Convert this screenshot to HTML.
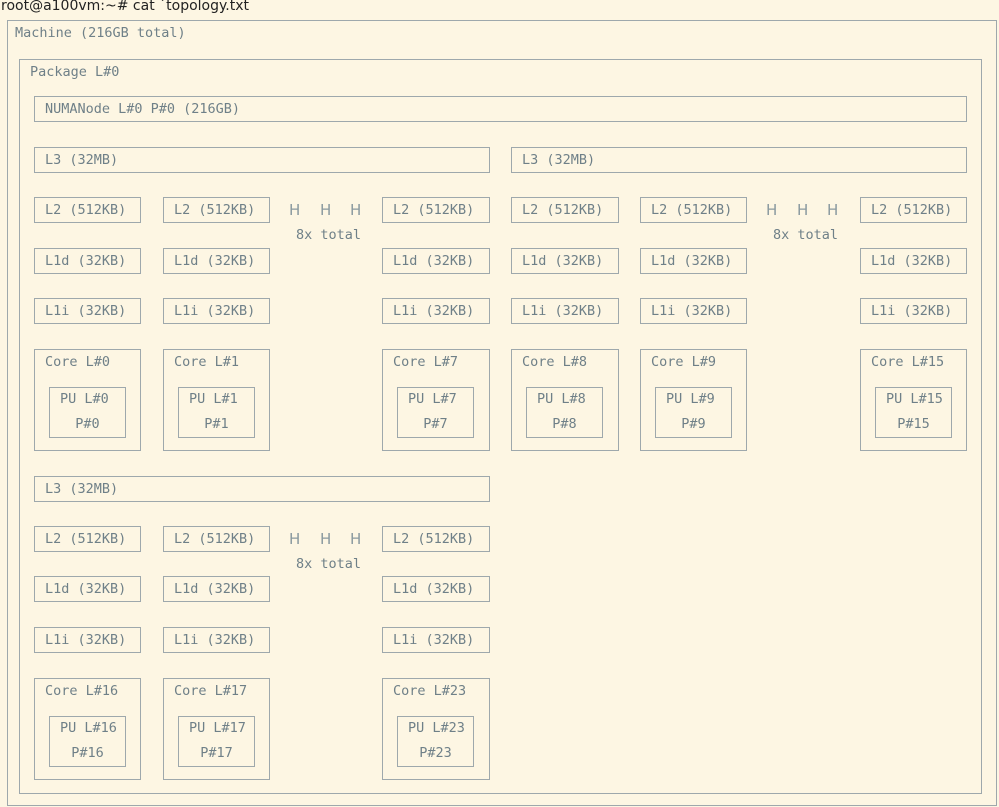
<!DOCTYPE html>
<html><head><meta charset="utf-8">
<style>
*{margin:0;padding:0;box-sizing:border-box}
body{width:999px;height:807px;background:#fdf6e3;position:relative;overflow:hidden;font-family:"DejaVu Sans Mono","Liberation Mono",monospace;font-size:13.5px;color:#6f8088}
.b{position:absolute;border:1.5px solid #9ea8ac}
.s{line-height:24px;padding-left:10px;white-space:pre}
.t{position:absolute;white-space:pre}
.c .t{left:10px;top:4px}
.p{position:absolute;left:14px;top:37px;width:77px;height:51px;border:1.5px solid #9ea8ac}
.p .a{position:absolute;left:10px;top:3px;white-space:pre}
.p .q{position:absolute;left:0;right:0;top:28px;text-align:center;white-space:pre}
.h{position:absolute;font-size:15px;color:#8a999f;font-family:"DejaVu Sans",sans-serif}
</style></head><body>
<div class="t" style="left:1px;top:-2px;color:#222;font-size:14px;font-family:'DejaVu Sans',sans-serif">root@a100vm:~# cat `topology.txt</div>
<div class="b" style="left:7px;top:20px;width:990px;height:786px"></div>
<div class="t" style="left:15px;top:25px">Machine (216GB total)</div>
<div class="b" style="left:19px;top:59px;width:963px;height:735px"></div>
<div class="t" style="left:30px;top:64px">Package L#0</div>
<div class="b s" style="left:34px;top:96px;width:933px;height:26px">NUMANode L#0 P#0 (216GB)</div>

<div class="b s" style="left:34px;top:147px;width:456px;height:26px">L3 (32MB)</div>
<div class="b s" style="left:511px;top:147px;width:456px;height:26px">L3 (32MB)</div>
<div class="b s" style="left:34px;top:476px;width:456px;height:26px">L3 (32MB)</div>

<div class="b s" style="left:34px;top:197px;width:107px;height:26px">L2 (512KB)</div>
<div class="b s" style="left:163px;top:197px;width:107px;height:26px">L2 (512KB)</div>
<div class="b s" style="left:382px;top:197px;width:108px;height:26px">L2 (512KB)</div>
<div class="b s" style="left:511px;top:197px;width:108px;height:26px">L2 (512KB)</div>
<div class="b s" style="left:640px;top:197px;width:107px;height:26px">L2 (512KB)</div>
<div class="b s" style="left:860px;top:197px;width:107px;height:26px">L2 (512KB)</div>
<div class="b s" style="left:34px;top:248px;width:107px;height:26px">L1d (32KB)</div>
<div class="b s" style="left:163px;top:248px;width:107px;height:26px">L1d (32KB)</div>
<div class="b s" style="left:382px;top:248px;width:108px;height:26px">L1d (32KB)</div>
<div class="b s" style="left:511px;top:248px;width:108px;height:26px">L1d (32KB)</div>
<div class="b s" style="left:640px;top:248px;width:107px;height:26px">L1d (32KB)</div>
<div class="b s" style="left:860px;top:248px;width:107px;height:26px">L1d (32KB)</div>
<div class="b s" style="left:34px;top:298px;width:107px;height:26px">L1i (32KB)</div>
<div class="b s" style="left:163px;top:298px;width:107px;height:26px">L1i (32KB)</div>
<div class="b s" style="left:382px;top:298px;width:108px;height:26px">L1i (32KB)</div>
<div class="b s" style="left:511px;top:298px;width:108px;height:26px">L1i (32KB)</div>
<div class="b s" style="left:640px;top:298px;width:107px;height:26px">L1i (32KB)</div>
<div class="b s" style="left:860px;top:298px;width:107px;height:26px">L1i (32KB)</div>

<div class="b c" style="left:34px;top:349px;width:107px;height:102px"><span class="t">Core L#0</span><div class="p"><span class="a">PU L#0</span><span class="q">P#0</span></div></div>
<div class="b c" style="left:163px;top:349px;width:107px;height:102px"><span class="t">Core L#1</span><div class="p"><span class="a">PU L#1</span><span class="q">P#1</span></div></div>
<div class="b c" style="left:382px;top:349px;width:108px;height:102px"><span class="t">Core L#7</span><div class="p"><span class="a">PU L#7</span><span class="q">P#7</span></div></div>
<div class="b c" style="left:511px;top:349px;width:108px;height:102px"><span class="t">Core L#8</span><div class="p"><span class="a">PU L#8</span><span class="q">P#8</span></div></div>
<div class="b c" style="left:640px;top:349px;width:107px;height:102px"><span class="t">Core L#9</span><div class="p"><span class="a">PU L#9</span><span class="q">P#9</span></div></div>
<div class="b c" style="left:860px;top:349px;width:107px;height:102px"><span class="t">Core L#15</span><div class="p"><span class="a">PU L#15</span><span class="q">P#15</span></div></div>

<div class="h" style="left:289px;top:201px">H</div><div class="h" style="left:320px;top:201px">H</div><div class="h" style="left:350px;top:201px">H</div>
<div class="t" style="left:296px;top:227px">8x total</div>
<div class="h" style="left:766px;top:201px">H</div><div class="h" style="left:797px;top:201px">H</div><div class="h" style="left:827px;top:201px">H</div>
<div class="t" style="left:773px;top:227px">8x total</div>

<div class="b s" style="left:34px;top:526px;width:107px;height:26px">L2 (512KB)</div>
<div class="b s" style="left:163px;top:526px;width:107px;height:26px">L2 (512KB)</div>
<div class="b s" style="left:382px;top:526px;width:108px;height:26px">L2 (512KB)</div>
<div class="b s" style="left:34px;top:576px;width:107px;height:26px">L1d (32KB)</div>
<div class="b s" style="left:163px;top:576px;width:107px;height:26px">L1d (32KB)</div>
<div class="b s" style="left:382px;top:576px;width:108px;height:26px">L1d (32KB)</div>
<div class="b s" style="left:34px;top:627px;width:107px;height:26px">L1i (32KB)</div>
<div class="b s" style="left:163px;top:627px;width:107px;height:26px">L1i (32KB)</div>
<div class="b s" style="left:382px;top:627px;width:108px;height:26px">L1i (32KB)</div>
<div class="b c" style="left:34px;top:678px;width:107px;height:102px"><span class="t">Core L#16</span><div class="p"><span class="a">PU L#16</span><span class="q">P#16</span></div></div>
<div class="b c" style="left:163px;top:678px;width:107px;height:102px"><span class="t">Core L#17</span><div class="p"><span class="a">PU L#17</span><span class="q">P#17</span></div></div>
<div class="b c" style="left:382px;top:678px;width:108px;height:102px"><span class="t">Core L#23</span><div class="p"><span class="a">PU L#23</span><span class="q">P#23</span></div></div>
<div class="h" style="left:289px;top:530px">H</div><div class="h" style="left:320px;top:530px">H</div><div class="h" style="left:350px;top:530px">H</div>
<div class="t" style="left:296px;top:556px">8x total</div>
</body></html>
